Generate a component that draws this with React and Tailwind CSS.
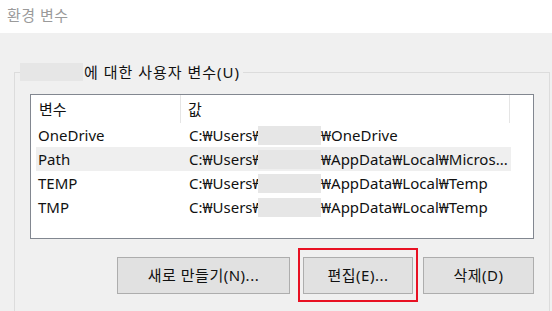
import React from 'react';

const FONT = { fontFamily: '"Noto Sans", "Noto Sans CJK KR", sans-serif' };

const rows = [
    { name: 'OneDrive', rest: '₩OneDrive' },
    { name: 'Path', rest: '₩AppData₩Local₩Micros...', selected: true },
    { name: 'TEMP', rest: '₩AppData₩Local₩Temp' },
    { name: 'TMP', rest: '₩AppData₩Local₩Temp' },
];

const App = () => {
    return (
        <div className="w-[552px] h-[311px] overflow-hidden bg-[#f0f0f0] text-[15px] text-[#111]" style={FONT}>
            {/* Title bar */}
            <div className="h-[33px] bg-white pl-[7px] pt-[3px] text-[#9a9a9a] leading-[24px] tracking-[0.5px]">환경 변수</div>

            {/* User variables group */}
            <fieldset className="mt-[29px] ml-[14px] w-[536px] h-[260px] border border-[#dcdcdc] border-b-0 pl-[15px] pr-[15px]">
                <legend className="-ml-[10px] flex items-center leading-[20px]">
                    <span className="inline-block w-[63px] h-[18px] bg-[#e6e6e6]"></span>
                    <span className="pl-[1px] pr-[3px] tracking-[1px]">에 대한 사용자 변수(U)</span>
                </legend>

                {/* List view */}
                <div className="mt-[12px] w-[504px] h-[145px] border border-[#828790] bg-white">
                    <div className="flex h-[28px] items-center">
                        <div className="w-[150px] pl-[8px] h-full flex items-center border-r border-[#e5e5e5]">변수</div>
                        <div className="w-[329px] pl-[7px] h-full flex items-center border-r border-[#e5e5e5]">값</div>
                    </div>
                    {rows.map((r) => (
                        <div
                            key={r.name}
                            className={`ml-[5px] w-[475px] h-[24px] flex items-center whitespace-nowrap ${r.selected ? 'bg-[#efefef]' : ''}`}
                        >
                            <div className="w-[153px] shrink-0 pl-[2px]">{r.name}</div>
                            <span className="w-[69px] shrink-0 overflow-visible">C:₩Users₩</span>
                            <span className="inline-block shrink-0 w-[63px] h-[19px] bg-[#e6e6e6]"></span>
                            <span>{r.rest}</span>
                        </div>
                    ))}
                </div>

                {/* Buttons */}
                <div className="mt-[18px] flex justify-end tracking-[0.5px]">
                    <button className="w-[173px] h-[37px] border border-[#adadad] bg-[#e1e1e1]">새로 만들기(N)...</button>
                    <div className="relative ml-[13px]">
                        <button className="w-[110px] h-[37px] border border-[#adadad] bg-[#e1e1e1]">편집(E)...</button>
                        <div className="absolute -left-[5px] -top-[9px] -right-[5px] -bottom-[8px] border-2 border-[#e81123]"></div>
                    </div>
                    <button className="ml-[10px] w-[111px] h-[37px] border border-[#adadad] bg-[#e1e1e1]">삭제(D)</button>
                </div>
            </fieldset>
        </div>
    );
};

export default App;
